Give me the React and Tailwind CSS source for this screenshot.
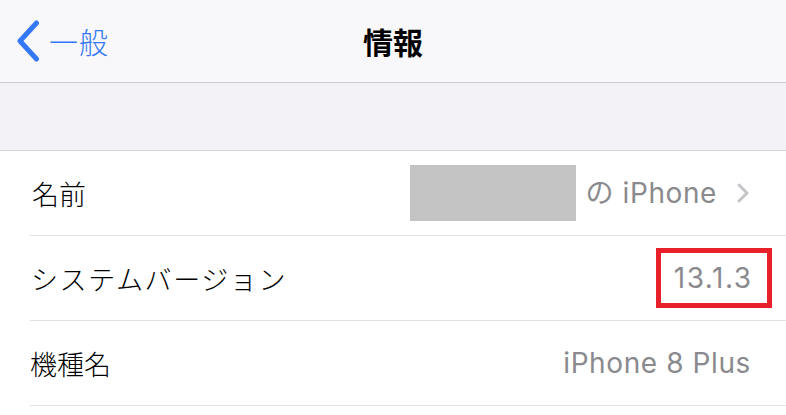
export default function App() {
  const font = { fontFamily: '"Inter", "Noto Sans CJK JP", sans-serif' }
  return (
    <div className="w-[786px] h-[415px] bg-white overflow-hidden" style={font}>
      {/* nav bar */}
      <div className="relative h-[83px] bg-[#f8f8fa] border-b border-[#cfcfd3] flex items-center">
        <div className="flex items-center pl-[16px] gap-[9px] text-[#3478f6]">
          <svg width="24" height="42" viewBox="0 0 24 42" fill="none">
            <path d="M20.5 3 L4 21 L20.5 39" stroke="#3478f6" strokeWidth="5" strokeLinecap="round" strokeLinejoin="round" />
          </svg>
          <span className="text-[29px] leading-none font-['Noto_Sans_CJK_JP'] font-light tracking-[1px]">一般</span>
        </div>
        <div className="absolute inset-0 flex items-center justify-center pointer-events-none">
          <span className="text-[30px] font-bold leading-none text-black font-['Noto_Sans_CJK_JP']">情報</span>
        </div>
      </div>

      {/* spacer band */}
      <div className="h-[68px] bg-[#f2f2f7] border-b border-[#d4d4d8]"></div>

      {/* rows */}
      <div className="pl-[30px]">
        <div className="h-[85px] flex items-center border-b border-[#e2e2e6] pr-[36px]">
          <span className="text-[27px] text-black font-['Noto_Sans_CJK_JP'] font-light pl-[2px] pt-[3px]">名前</span>
          <div className="ml-auto flex items-center">
            <div className="w-[166px] h-[56px] bg-[#c3c3c3]"></div>
            <span className="ml-[9px] text-[28px] text-[#8a8a8e] tracking-[0.6px]">の iPhone</span>
            <svg className="ml-[19px]" width="14" height="20" viewBox="0 0 14 20" fill="none">
              <path d="M3 2 L11 10 L3 18" stroke="#c4c4c8" strokeWidth="3" strokeLinecap="round" strokeLinejoin="round" />
            </svg>
          </div>
        </div>
        <div className="h-[85px] flex items-center border-b border-[#e2e2e6] pr-[14px]">
          <span className="text-[27px] text-black font-['Noto_Sans_CJK_JP'] font-light pl-[1px] pt-[3px] tracking-[1.6px]">システムバージョン</span>
          <div className="ml-auto w-[116px] h-[60px] border-[5px] border-[#e8202a] flex items-center justify-end pr-[16px]">
            <span className="text-[28px] text-[#8a8a8e] tracking-[1.5px] mr-[-1.5px]">13.1.3</span>
          </div>
        </div>
        <div className="h-[85px] flex items-center border-b border-[#e2e2e6] pr-[35px]">
          <span className="text-[27px] text-black font-['Noto_Sans_CJK_JP'] font-light pt-[3px]">機種名</span>
          <span className="ml-auto text-[28px] text-[#8a8a8e] tracking-[0.6px]">iPhone 8 Plus</span>
        </div>
      </div>
    </div>
  )
}
